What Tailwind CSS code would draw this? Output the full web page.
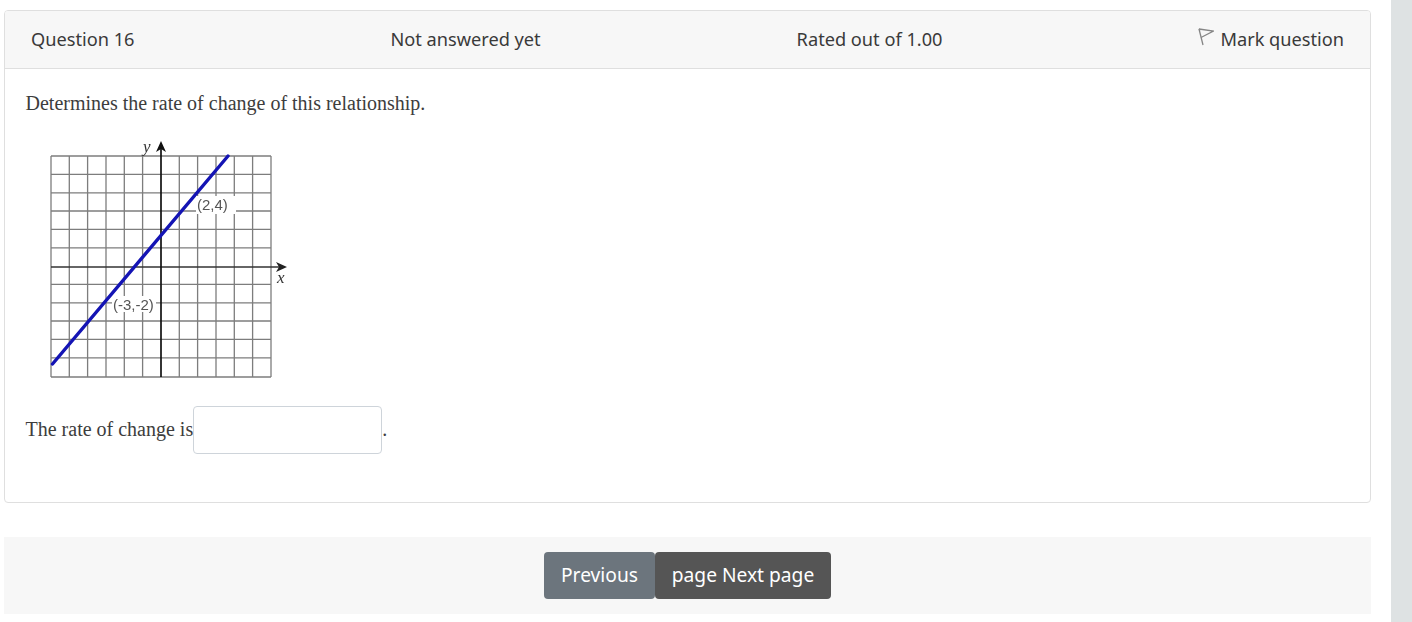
<!DOCTYPE html>
<html lang="en">
<head>
    <meta charset="UTF-8">
    <meta name="viewport" content="width=device-width, initial-scale=1.0">
    <title>Question 16</title>
    <script src="https://cdn.jsdelivr.net/npm/@tailwindcss/browser@4"></script>
</head>
<body class="bg-white h-[622px] overflow-hidden flex font-['Noto_Sans',sans-serif] text-[#3a3a3a]">
    <main class="w-[1391px] pl-1 pr-5 pt-2.5">
        <!-- question card -->
        <section class="h-[493px] border border-[#dfdfdf] rounded-[4px] overflow-hidden">
            <header class="h-[58px] bg-[#f7f7f7] border-b border-[#dfdfdf] pl-[26px] pr-[26px] flex items-center justify-between text-[18.2px]">
                <span>Question 16</span>
                <span>Not answered yet</span>
                <span>Rated out of 1.00</span>
                <span class="flex items-center gap-[7px]">
                    <svg class="w-[16px] h-5 -mt-[3px]" viewBox="0 0 16 20" fill="none" stroke="#858585" stroke-width="1.3">
                        <path d="M1 1 L5 17"/>
                        <path d="M2.5 2 L1 1 L15.5 3 L3 9.5"/>
                    </svg>
                    <span class="-ml-[1px]">Mark question</span>
                </span>
            </header>
            <div class="pl-[20.5px] font-['Liberation_Serif',serif] text-[20px] text-[#3d3d3d]">
                <p class="pt-[22px] leading-[24px]">Determines the rate of change of this relationship.</p>
                <svg class="block mt-[21px] ml-[4.5px] w-[270px] h-[250px] blur-[0.5px]" viewBox="0 0 270 250" fill="none">
                    <!-- origin of this svg: page x 30, y 136 -->
                    <g stroke="#7d7d7d" stroke-width="1.3">
                        <path d="M21 20H241M21 38.4H241M21 56.8H241M21 75H241M21 93.4H241M21 111.8H241M21 148.4H241M21 166.8H241M21 185H241M21 203.4H241M21 221.8H241M21 241H241"/>
                        <path d="M21 20V241M39.3 20V241M57.6 20V241M76 20V241M94.3 20V241M112.6 20V241M149.3 20V241M167.6 20V241M186 20V241M204.3 20V241M222.6 20V241M241 20V241"/>
                    </g>
                    <path d="M21 131H250" stroke="#333" stroke-width="1.7"/>
                    <path d="M131 241V10" stroke="#111" stroke-width="1.7"/>
                    <path d="M126 16L131 5L136 16L131 13Z" fill="#111"/>
                    <path d="M246 126L257 131L246 136L249 131Z" fill="#222"/>
                    <path d="M22.5 228L198 20" stroke="#1414b4" stroke-width="3.4" stroke-linecap="round"/>
                    <rect x="166" y="60" width="40" height="18" fill="#fff"/>
                    <rect x="82" y="160" width="44" height="16" fill="#fff"/>
                    <text x="167" y="74" fill="#555" font-size="15" font-family="Liberation Sans, sans-serif">(2,4)</text>
                    <text x="83" y="174" fill="#555" font-size="15" font-family="Liberation Sans, sans-serif">(-3,-2)</text>
                    <text x="113" y="16" fill="#333" font-size="17" font-style="italic" font-family="Liberation Serif, serif">y</text>
                    <text x="247" y="147" fill="#333" font-size="17" font-style="italic" font-family="Liberation Serif, serif">x</text>
                </svg>
                <p class="mt-[20px] flex items-center">
                    <span class="pb-[2px]">The rate of change is</span><input type="text" class="w-[189px] h-12 bg-white border border-[#ced4da] rounded-[4px]"><span class="pb-[2px]">.</span>
                </p>
            </div>
        </section>
        <!-- page navigation -->
        <nav class="mt-[34px] h-[77px] bg-[#f7f7f7] flex items-center justify-center text-[19.2px] text-white">
            <button class="w-[111px] h-[47px] pb-[1px] bg-[#6c757d] rounded-[4px]">Previous</button>
            <button class="w-[176px] h-[47px] pb-[1px] bg-[#555555] rounded-[4px]">page Next page</button>
        </nav>
    </main>
    <aside class="w-[21px] h-full bg-[#dee2e3]"></aside>
</body>
</html>
